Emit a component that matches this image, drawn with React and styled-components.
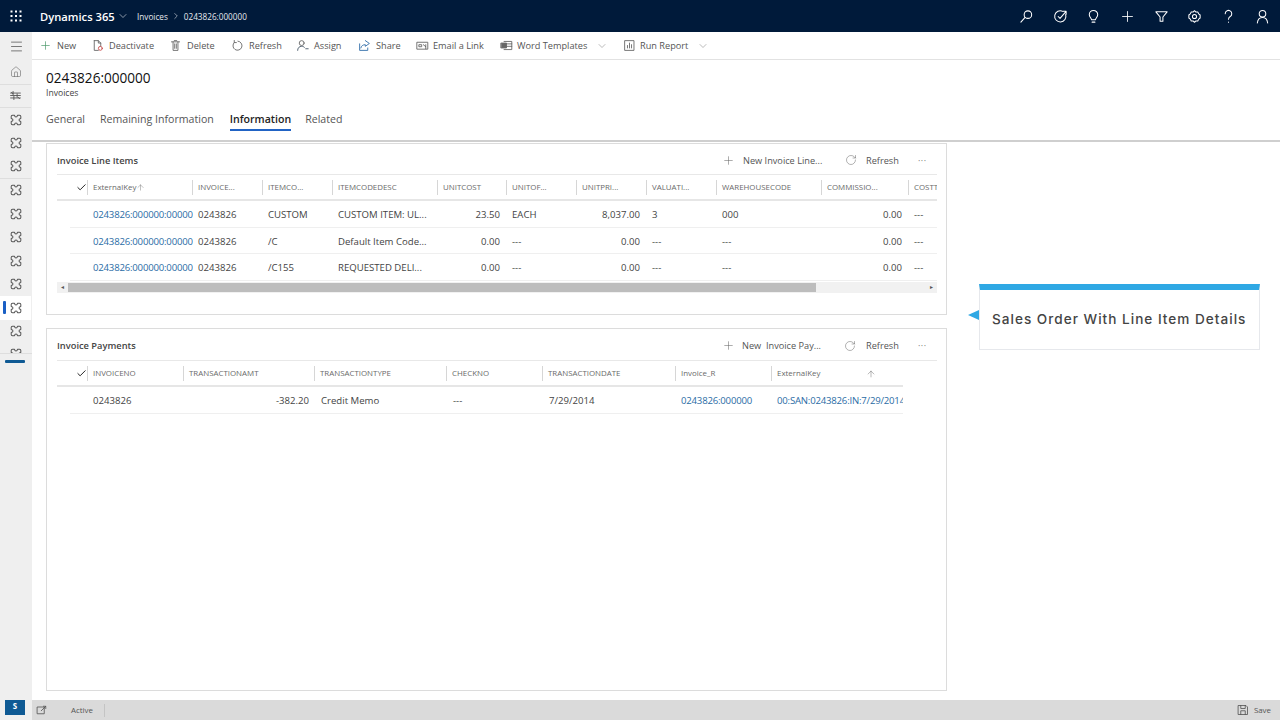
import React from "react";
import styled, { createGlobalStyle } from "styled-components";
import { ChevronDown, ChevronRight, Check, Plus, RotateCw, Home, Menu, ArrowUp } from "lucide-react";

const Global = createGlobalStyle`
  html, body { margin: 0; padding: 0; background: #fff; }
  #root { width: 1280px; height: 720px; overflow: hidden; }
  * { box-sizing: border-box; }
`;

const Page = styled.div`
  width: 1280px; height: 720px; display: flex; flex-direction: column;
  font-family: "Open Sans", "Noto Sans", sans-serif; color: #333; background: #fff;
`;
const TopBar = styled.header`
  height: 32px; flex: none; background: #001a3a; color: #fff; display: flex; align-items: center;
`;
const Waffle = styled.div`
  width: 32px; display: flex; justify-content: center; align-items: center;
`;
const Brand = styled.span`
  margin-left: 8px; font-size: 11.2px; font-weight: 600; width: 75px; white-space: nowrap;
`;
const Crumb = styled.span`
  font-size: 8.2px; color: #e6e9ee; white-space: nowrap; margin-left: ${p => p.$ml ?? 0}px;
`;
const CrumbSep = styled.span`
  display: flex; width: 16px; justify-content: center; color: #e6e9ee;
`;
const TopIcons = styled.div`
  margin-left: auto; display: flex; align-items: center; padding-right: 1px;
`;
const TopIcon = styled.span`
  width: 33.7px; height: 32px; display: flex; align-items: center; justify-content: center;
`;
const Body = styled.div`
  flex: 1; min-height: 0; display: flex;
`;
const Side = styled.nav`
  width: 32px; flex: none; background: #efefef; display: flex; flex-direction: column; position: relative;
`;
const SideTop = styled.div`
  height: 28px; display: flex; align-items: center; justify-content: center; margin-bottom: 1px;
`;
const SideItem = styled.div`
  height: 23.5px; display: flex; align-items: center; justify-content: center; position: relative;
  background: ${p => (p.$active ? "#fff" : "transparent")};
  border-bottom: ${p => (p.$line ? "1px solid #dedede" : "0")};
  margin-right: 1px;
  &::before {
    content: ""; display: ${p => (p.$active ? "block" : "none")}; position: absolute;
    left: 3px; top: 5px; width: 3px; height: 13px; background: #1a5fc4; border-radius: 1px;
  }
`;
const SideClip = styled.div`
  height: 11px; overflow: hidden; display: flex; justify-content: center; padding-top: 4px; border-bottom: 1px solid #dedede;
`;
const SideBar = styled.div`
  height: 3px; width: 20px; margin: 6px 0 0 5px; background: #0f5a94; border-radius: 1px;
`;
const SideSpacer = styled.div`flex: 1;`;
const Avatar = styled.div`
  width: 20px; height: 15px; margin: 0 0 5px 5px; background: #0f5a94; color: #fff; font-size: 8px; font-weight: 700;
  text-align: center; line-height: 11px;
`;
const Main = styled.div`
  flex: 1; min-width: 0; display: flex; flex-direction: column;
`;
const Command = styled.div`
  height: 28px; flex: none; display: flex; align-items: center; padding-left: 7px;
  border-bottom: 1px solid #e2e2e2; font-size: 9.2px; color: #555;
`;
const Cmd = styled.span`
  display: flex; align-items: center; white-space: nowrap; width: ${p => p.$w}px;
  svg { flex: none; margin-right: ${p => p.$gap ?? 5}px; }
`;
const CmdChevron = styled.span`
  display: flex; margin-left: 9px; color: #777;
`;
const RecordHead = styled.div`
  height: 80px; flex: none; padding: 10px 0 0 14px; display: flex; flex-direction: column;
`;
const RecordTitle = styled.h1`
  margin: 0; font-size: 13.6px; line-height: 16px; font-weight: 500; color: #111; font-family: "Open Sans", sans-serif;
`;
const RecordSub = styled.div`
  font-size: 8.6px; line-height: 12px; margin-top: 1px; color: #444;
`;
const Tabs = styled.div`
  display: flex; margin-top: 12px;
`;
const Tab = styled.span`
  margin-right: ${p => p.$mr}px; font-size: 10.6px; line-height: 14px; height: 20px; color: ${p => (p.$on ? "#222" : "#555")};
  font-weight: ${p => (p.$on ? 600 : 400)}; border-bottom: ${p => (p.$on ? "2px solid #2163c4" : "0")}; padding-top: 1px; white-space: nowrap;
`;
const Rule = styled.div`
  height: 2px; flex: none; background: #cfcfcf;
`;
const Content = styled.div`
  flex: 1; min-height: 0; display: flex; padding-left: 14px;
`;
const Sections = styled.div`
  width: 901px; flex: none; display: flex; flex-direction: column; padding-top: 1px;
`;
const Section = styled.section`
  border: 1px solid #dcdcdc; height: ${p => p.$h}px; margin-bottom: ${p => p.$mb}px; padding: 0 9px 0 10px; position: relative;
`;
const SecHead = styled.div`
  height: ${p => p.$h}px; padding-top: 2px; display: flex; align-items: center; border-bottom: 1px solid #e8e8e8; font-size: 9.2px; color: #555;
`;
const SecTitle = styled.h2`
  margin: 0; font-size: 9.3px; font-weight: 600; color: #444; font-family: inherit;
`;
const SecTools = styled.div`
  margin-left: auto; display: flex; align-items: center;
`;
const Tool = styled.span`
  display: flex; align-items: center; white-space: nowrap; width: ${p => p.$w}px;
  svg { flex: none; margin-right: ${p => p.$gap}px; color: #666; }
`;
const More = styled.span`
  width: 19px; color: #777; font-size: 9px; letter-spacing: .5px;
`;
const Grid = styled.div`
  width: ${p => p.$w ?? 880}px; overflow: hidden;
`;
const HeadRow = styled.div`
  height: 26px; padding-top: 1px; display: flex; align-items: center; border-bottom: 2px solid #e6e6e6;
`;
const CheckCell = styled.div`
  width: 30px; flex: none; display: flex; justify-content: flex-end; color: #111;
`;
const HeadCell = styled.div`
  width: ${p => p.$w}px; flex: none; height: 15px; line-height: 15px; font-size: 7.9px; color: #6a6a6a; white-space: nowrap; overflow: hidden;
  border-left: 1px solid #d6d6d6; padding-left: 5px; display: flex; align-items: center;
`;
const SortMark = styled.span`
  display: flex; margin-left: ${p => p.$ml}px; color: #555;
`;
const Row = styled.div`
  height: 26.5px; margin-left: 13px; padding: 2px 0 0 18px; display: flex; align-items: center; border-bottom: 1px solid #efefef; width: ${p => p.$w ?? 867}px;
`;
const Cell = styled.div`
  width: ${p => p.$w}px; flex: none; padding: 0 ${p => (p.$right ? 7 : 0)}px 0 5px; font-size: 9.6px; white-space: nowrap; overflow: hidden;
  text-align: ${p => (p.$right ? "right" : "left")}; color: ${p => (p.$link ? "#2a6ca5" : "#444")};
  letter-spacing: ${p => (p.$link ? "-0.2px" : "0")};
`;
const Scroll = styled.div`
  height: 11px; margin-top: 1px; width: 880px; display: flex; align-items: center; background: #f1f1f1; position: relative; font-size: 6px; color: #555;
`;
const Arrow = styled.span`
  width: 11px; flex: none; display: flex; justify-content: center;
`;
const Thumb = styled.div`
  width: 748px; height: 9px; background: #bdbdbd;
`;
const ScrollFill = styled.div`flex: 1;`;
const Callout = styled.aside`
  width: 281px; height: 66px; margin: 142px 0 0 32px; flex: none; border: 1px solid #e6e8ec; border-top: 6px solid #2fa8e4; position: relative;
  display: flex; align-items: center; padding: 0 0 1px 12px; font-family: Inter, sans-serif; font-weight: 500; font-size: 13.6px; letter-spacing: 1px; color: #444; white-space: nowrap;
  &::before {
    content: ""; position: absolute; left: -12px; top: 20px; border: 5.5px solid transparent; border-left: 0; border-right: 11px solid #2fa8e4;
  }
`;
const Status = styled.footer`
  height: 20px; flex: none; background: #dadada; display: flex; align-items: center; font-size: 7.9px; color: #555; padding-left: 4px;
`;
const ActiveText = styled.span`
  margin-left: 23px; width: 34px; height: 13px; line-height: 13px; border-right: 1px solid #c4c4c4;
`;
const SaveBox = styled.span`
  margin-left: auto; margin-right: 9px; display: flex; align-items: center; gap: 5px;
`;

const Puzzle = ({ c = "#555", s = 14 }) => (
  <svg width={s} height={s} viewBox="0 0 16 16" fill="none" stroke={c} strokeWidth="1.15" strokeLinejoin="round">
    <path d="M4 2.500H6Q6.500 2.500 6.500 3.200Q6.500 4.500 8 4.500Q9.500 4.500 9.500 3.200Q9.500 2.500 10 2.500H12Q13.500 2.500 13.500 4V6Q13.500 6.500 12.800 6.500Q11.500 6.500 11.500 8Q11.500 9.500 12.800 9.500Q13.500 9.500 13.500 10V12Q13.500 13.500 12 13.500H10Q9.500 13.500 9.500 12.800Q9.500 11.500 8 11.500Q6.500 11.500 6.500 12.800Q6.500 13.500 6 13.500H4Q2.500 13.500 2.500 12V10Q2.500 9.500 3.200 9.500Q4.500 9.500 4.500 8Q4.500 6.500 3.200 6.500Q2.500 6.500 2.500 6V4Q2.500 2.500 4 2.500Z" />
  </svg>
);
const Ln = ({ s = 13, c = "#666", children }) => (
  <svg width={s} height={s} viewBox="0 0 16 16" fill="none" stroke={c} strokeWidth="1.1" strokeLinecap="round" strokeLinejoin="round">{children}</svg>
);

const lineCols = [
  ["ExternalKey", 105], ["INVOICE...", 70], ["ITEMCO...", 70], ["ITEMCODEDESC", 105], ["UNITCOST", 69], ["UNITOF...", 70], ["UNITPRI...", 70], ["VALUATI...", 70], ["WAREHOUSECODE", 105], ["COMMISSIO...", 87], ["COSTT", 40],
];
const lineRows = [
  ["0243826:000000:00000", "0243826", "CUSTOM", "CUSTOM ITEM: UL...", "23.50", "EACH", "8,037.00", "3", "000", "0.00", "---"],
  ["0243826:000000:00000", "0243826", "/C", "Default Item Code...", "0.00", "---", "0.00", "---", "---", "0.00", "---"],
  ["0243826:000000:00000", "0243826", "/C155", "REQUESTED DELI...", "0.00", "---", "0.00", "---", "---", "0.00", "---"],
];
const rightCols = [4, 6, 9];
const payCols = [["INVOICENO", 96], ["TRANSACTIONAMT", 131], ["TRANSACTIONTYPE", 132], ["CHECKNO", 96], ["TRANSACTIONDATE", 133], ["Invoice_R", 96], ["ExternalKey", 128]];

const commands = [
  ["New", 52, <Plus key="i" size={13} color="#4d9a6c" strokeWidth={1.3} />, 5],
  ["Deactivate", 78, <Ln key="i"><path d="M4 2h5l3 3v4M4 2v12h5M9 2v3h3" /><circle cx="11.500" cy="11.500" r="2.400" stroke="#c84b4b" /></Ln>, 5],
  ["Delete", 62, <Ln key="i"><path d="M3 3.500h10M5 3.500V14h6V3.500M6.500 2h3M7 6v5.500M9 6v5.500" /></Ln>, 5],
  ["Refresh", 65, <Ln key="i"><path d="M8.500 2.600A5.600 5.600 0 1 1 4 4.200M4 1.800v2.600h2.600" /></Ln>, 5],
  ["Assign", 62, <Ln key="i"><circle cx="7" cy="5" r="3" /><path d="M2 14c0-3 2-5 5-5 1.400 0 2.500.4 3.300 1.200M12 12h3" stroke="#456" /></Ln>, 5],
  ["Share", 58, <Ln key="i" c="#2f6ca8"><path d="M9 2l5 3.500-5 3.500V7c-3 0-5 1.500-5.500 4M2 6v8h10v-3" /></Ln>, 5],
  ["Email a Link", 84, <Ln key="i"><path d="M1.500 4h13v8.500h-13zM4 7h3v2.500H4zM9 7l3 2.500M12 7v5" /></Ln>, 4],
  ["Word Templates", 123, <Ln key="i"><path d="M5 3h9.500v10H5M5 6h9.500M5 9h9.500" /><path d="M1.500 5H8v6H1.500z" fill="#666" /></Ln>, 4],
  ["Run Report", 100, <Ln key="i"><path d="M2.500 2h11v12h-11zM5.500 11V8M8 11V5M10.500 11V7" /></Ln>, 4],
];

export default function App() {
  const puzzles = [0,1,2,3,4,5,6,7,8,9];
  return (
    <Page>
      <Global />
      <TopBar>
        <Waffle>
          <svg width="12" height="12" viewBox="0 0 12 12" fill="#fff">
            {[1.5,6,10.5].flatMap(y => [1.5,6,10.5].map(x => <rect key={x+"-"+y} x={x-1} y={y-1} width="2" height="2" />))}
          </svg>
        </Waffle>
        <Brand>Dynamics 365</Brand>
        <CrumbSep><ChevronDown size={12} strokeWidth={1.2} /></CrumbSep>
        <Crumb $ml={6}>Invoices</Crumb>
        <CrumbSep><ChevronRight size={10} strokeWidth={1.4} /></CrumbSep>
        <Crumb>0243826:000000</Crumb>
        <TopIcons>
          <TopIcon><Ln s={15} c="#fff"><circle cx="9.500" cy="6" r="4" /><path d="M6.500 9L2 14" /></Ln></TopIcon>
          <TopIcon><Ln s={15} c="#fff"><path d="M13.500 6a6 6 0 1 1-3-3.500" /><path d="M5.500 8l2 2 6-7M11 2.500h3v3" /></Ln></TopIcon>
          <TopIcon><Ln s={15} c="#fff"><path d="M6 11.500C5.500 9.500 3.500 8.500 3.500 6a4.500 4.500 0 0 1 9 0c0 2.500-2 3.500-2.500 5.500zM6.500 14h3" /></Ln></TopIcon>
          <TopIcon><Plus size={17} color="#fff" strokeWidth={1.2} /></TopIcon>
          <TopIcon><Ln s={15} c="#fff"><path d="M2 3h12L9.500 8.500V13h-3V8.500z" /></Ln></TopIcon>
          <TopIcon><Ln s={15} c="#fff"><circle cx="8" cy="8" r="2.200" /><path d="M8 1.800l1.500 1.500h2l1 1.900 1.500 1.200v3.200l-1.500 1.200-1 1.900h-2L8 14.200l-1.500-1.500h-2l-1-1.900L2 9.600V6.400l1.500-1.200 1-1.900h2z" /></Ln></TopIcon>
          <TopIcon><Ln s={15} c="#fff"><path d="M4.500 5a3.500 3.500 0 1 1 5.300 3C8.700 8.700 8 9.300 8 10.800M8 13.800v.2" /></Ln></TopIcon>
          <TopIcon><Ln s={15} c="#fff"><circle cx="8" cy="5" r="3.500" /><path d="M2.500 15c.3-3.500 2.500-6 5.500-6s5.200 2.500 5.500 6" /></Ln></TopIcon>
        </TopIcons>
      </TopBar>
      <Body>
        <Side>
          <SideTop><Menu size={15} color="#444" strokeWidth={1.1} /></SideTop>
          <SideItem $line><Home size={12} color="#666" strokeWidth={1.2} /></SideItem>
          <SideItem $line>
            <Ln s={13} c="#555"><path d="M2 5h12M2 8h12M2 11h12M5 3v4M10 6v4M6 9v4M3 4l2 2M11 10l2 2" /></Ln>
          </SideItem>
          {puzzles.map(i => (
            <SideItem key={i} $active={i === 8} $line={i === 2}><Puzzle /></SideItem>
          ))}
          <SideClip><Puzzle /></SideClip>
          <SideBar />
          <SideSpacer />
          <Avatar>S</Avatar>
        </Side>
        <Main>
          <Command>
            {commands.map(([t, w, ic, gap]) => (
              <Cmd key={t} $w={w} $gap={gap}>
                {ic}{t}
                {(t === "Word Templates" || t === "Run Report") && <CmdChevron><ChevronDown size={12} strokeWidth={1} /></CmdChevron>}
              </Cmd>
            ))}
          </Command>
          <RecordHead>
            <RecordTitle>0243826:000000</RecordTitle>
            <RecordSub>Invoices</RecordSub>
            <Tabs>
              <Tab $mr={15}>General</Tab>
              <Tab $mr={16}>Remaining Information</Tab>
              <Tab $on $mr={14}>Information</Tab>
              <Tab $mr={0}>Related</Tab>
            </Tabs>
          </RecordHead>
          <Rule />
          <Content>
            <Sections>
              <Section $h={172} $mb={13}>
                <SecHead $h={31}>
                  <SecTitle>Invoice Line Items</SecTitle>
                  <SecTools>
                    <Tool $w={123} $gap={8}><Plus size={13} strokeWidth={1} />New Invoice Line...</Tool>
                    <Tool $w={73} $gap={9}><RotateCw size={12} strokeWidth={1} />Refresh</Tool>
                    <More>···</More>
                  </SecTools>
                </SecHead>
                <Grid>
                  <HeadRow>
                    <CheckCell><Check size={11} strokeWidth={2} /></CheckCell>
                    {lineCols.map(([t, w]) => (
                      <HeadCell key={t} $w={w}>{t}{t === "ExternalKey" && <SortMark $ml={0}><ArrowUp size={9} strokeWidth={1} /></SortMark>}</HeadCell>
                    ))}
                  </HeadRow>
                  {lineRows.map((r, i) => (
                    <Row key={i}>
                      {r.map((c, j) => (
                        <Cell key={j} $w={lineCols[j][1]} $link={j === 0} $right={rightCols.includes(j)}>{c}</Cell>
                      ))}
                    </Row>
                  ))}
                </Grid>
                <Scroll>
                  <Arrow>◂</Arrow><Thumb /><ScrollFill /><Arrow>▸</Arrow>
                </Scroll>
              </Section>
              <Section $h={363} $mb={0}>
                <SecHead $h={32}>
                  <SecTitle>Invoice Payments</SecTitle>
                  <SecTools>
                    <Tool $w={122} $gap={7}><Plus size={13} strokeWidth={1} />New&nbsp; Invoice Pay...</Tool>
                    <Tool $w={74} $gap={10}><RotateCw size={12} strokeWidth={1} />Refresh</Tool>
                    <More>···</More>
                  </SecTools>
                </SecHead>
                <Grid $w={846}>
                  <HeadRow>
                    <CheckCell><Check size={11} strokeWidth={2} /></CheckCell>
                    {payCols.map(([t, w]) => (
                      <HeadCell key={t} $w={w}>{t}{t === "ExternalKey" && <SortMark $ml={46}><ArrowUp size={10} strokeWidth={1} /></SortMark>}</HeadCell>
                    ))}
                  </HeadRow>
                  <Row $w={833}>
                    <Cell $w={96}>0243826</Cell>
                    <Cell $w={132} $right>-382.20</Cell>
                    <Cell $w={132}>Credit Memo</Cell>
                    <Cell $w={96}>---</Cell>
                    <Cell $w={132}>7/29/2014</Cell>
                    <Cell $w={96} $link>0243826:000000</Cell>
                    <Cell $w={131} $link>00:SAN:0243826:IN:7/29/2014</Cell>
                  </Row>
                </Grid>
              </Section>
            </Sections>
            <Callout>Sales Order With Line Item Details</Callout>
          </Content>
          <Status>
            <Ln s={12} c="#555"><path d="M2 4h9v9H2zM7 9l6-6M10 3h3v3" /></Ln>
            <ActiveText>Active</ActiveText>
            <SaveBox>
              <Ln s={12} c="#555"><path d="M2 2h10l2 2v10H2zM5 2v4h6V2M5 14V9h6v5" /></Ln>
              Save
            </SaveBox>
          </Status>
        </Main>
      </Body>
    </Page>
  );
}
